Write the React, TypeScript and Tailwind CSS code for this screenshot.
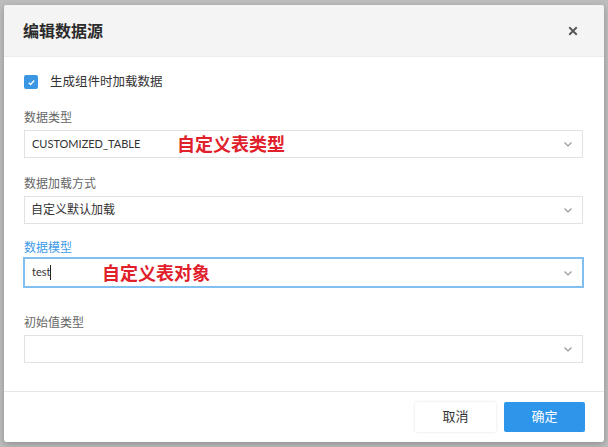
import React from 'react';

const font = { fontFamily: 'Lato, "Noto Sans CJK SC", sans-serif' };

const Chevron = () => (
  <svg className="h-3 w-3 text-[#999]" viewBox="0 0 12 12" fill="none" stroke="currentColor" strokeWidth={1.2}>
    <path d="M2.5 4.5l3.5 3.5 3.5-3.5" />
  </svg>
);

const SelectField: React.FC<{
  label: string;
  value?: string;
  latin?: boolean;
  note?: string;
  noteClass?: string;
  focused?: boolean;
  caret?: boolean;
  className?: string;
}> = ({ label, value, latin = false, note, noteClass = '', focused = false, caret = false, className = '' }) => (
  <div className={`flex flex-col ${className}`}>
    <div className={`text-[12px] leading-[16px] ${focused ? 'text-[#3d9be8] mb-[1px]' : 'text-[#666] mb-[4px]'}`}>{label}</div>
    <div
      className={`relative flex items-center pl-[6px] pr-[8px] bg-white ${
        focused ? 'h-[31px] border-2 border-[#80bff0] -mx-[1px]' : 'h-[28px] border border-[#e2e2e2]'
      }`}
    >
      <span className={`${latin ? 'text-[11px] pl-[1px]' : 'text-[12px]'} text-[#333]`}>{value}</span>
      {caret && <span className="w-px h-[15px] bg-[#222]" />}
      {note && (
        <span className={`absolute top-1/2 -translate-y-1/2 text-[18px] font-bold text-[#e0202a] ${noteClass}`}>{note}</span>
      )}
      <span className="ml-auto">
        <Chevron />
      </span>
    </div>
  </div>
);

const App = () => {
  return (
    <div className="w-[608px] h-[447px] bg-[#bdbdbd] pt-[5px] pl-[4px]" style={font}>
      <div className="w-[600px] h-[437px] bg-white rounded-[3px] shadow-[0_2px_6px_rgba(0,0,0,0.25)] flex flex-col overflow-hidden">
        <div className="h-[52px] bg-[#f4f4f4] flex items-center justify-between pl-[19px] pr-[26px] border-b border-[#ececec]">
          <div className="text-[16px] font-bold text-[#2b2b2b]">编辑数据源</div>
          <svg className="h-[10px] w-[10px] text-[#555]" viewBox="0 0 12 12" stroke="currentColor" strokeWidth={2.2}>
            <path d="M1.5 1.5l9 9M10.5 1.5l-9 9" />
          </svg>
        </div>

        <div className="flex-1 pl-[20px] pr-[21px] pt-[17px]">
          <div className="flex items-center gap-[12px] h-[16px]">
            <span className="w-[14px] h-[14px] bg-[#3b97e3] rounded-[2px] flex items-center justify-center">
              <svg className="w-[9px] h-[9px]" viewBox="0 0 10 10" fill="none" stroke="white" strokeWidth={1.4}>
                <path d="M2 5.2l2 2 4-4.4" />
              </svg>
            </span>
            <span className="text-[12.5px] text-[#333]">生成组件时加载数据</span>
          </div>

          <div className="mt-[20px] flex flex-col">
            <SelectField label="数据类型" value="CUSTOMIZED_TABLE" latin note="自定义表类型" noteClass="left-[152px]" />
            <SelectField className="mt-[18px]" label="数据加载方式" value="自定义默认加载" />
            <SelectField
              className="mt-[16px]"
              label="数据模型"
              value="test"
              latin
              caret
              focused
              note="自定义表对象"
              noteClass="left-[77px]"
            />
            <SelectField className="mt-[27px]" label="初始值类型" />
          </div>
        </div>

        <div className="h-[50px] border-t border-[#e6e6e6] flex items-center justify-end gap-[8px] pr-[19px] mb-[1px]">
          <button className="w-[81px] h-[30px] bg-white rounded-[2px] shadow-[0_0_3px_rgba(0,0,0,0.12)] text-[13px] text-[#333]">
            取消
          </button>
          <button className="w-[81px] h-[30px] bg-[#2d95ea] rounded-[2px] text-[13px] text-white">确定</button>
        </div>
      </div>
    </div>
  );
};

export default App;
